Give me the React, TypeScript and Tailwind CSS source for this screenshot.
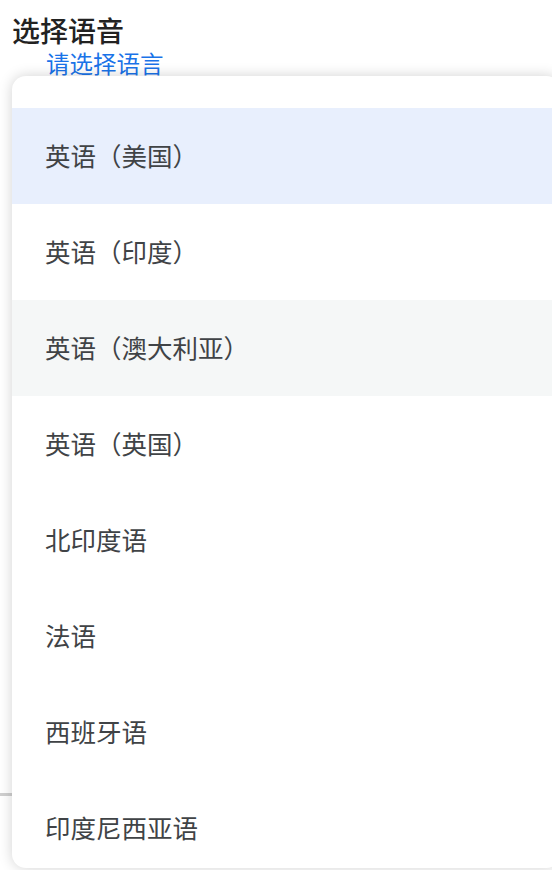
import React from "react";

const languages = [
  "英语（美国）",
  "英语（印度）",
  "英语（澳大利亚）",
  "英语（英国）",
  "北印度语",
  "法语",
  "西班牙语",
  "印度尼西亚语",
];

export default function App() {
  return (
    <div
      className="relative h-[870px] w-[552px] overflow-hidden bg-white"
      style={{ fontFamily: '"Noto Sans", "Noto Sans CJK SC", sans-serif' }}
    >
      {/* underlying form */}
      <div className="flex flex-col pl-3 pt-[13px]">
        <h1 className="text-[28px] font-medium leading-[36px] text-[#222222]">选择语音</h1>
        <div className="pl-[34px] text-[23.5px] leading-[30px] text-[#1a73e8]">请选择语言</div>
      </div>
      <div className="mt-[714px] h-[3px] w-full bg-[#cfcfcf]" />

      {/* dropdown menu */}
      <div className="absolute left-3 top-[76px] h-[792px] w-[548px] overflow-hidden rounded-[14px] bg-white pt-8 shadow-[0_0_14px_rgba(0,0,0,0.18)]">
        {languages.map((lang, i) => (
          <div
            key={lang}
            className={
              "flex h-24 items-center pl-[33px] text-[25.5px] text-[#404346] " +
              (i === 0 ? "bg-[#e8effd]" : i === 2 ? "bg-[#f5f7f7]" : "")
            }
          >
            {lang}
          </div>
        ))}
      </div>
    </div>
  );
}
